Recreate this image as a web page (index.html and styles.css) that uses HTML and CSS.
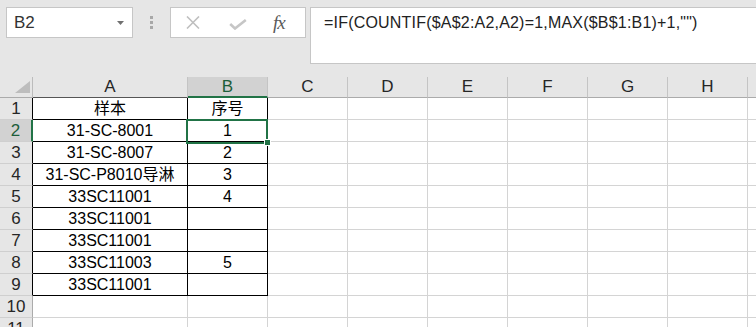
FILE: index.html
```html
<!DOCTYPE html>
<html lang="zh-CN">
<head>
    <meta charset="UTF-8">
    <title>Sheet1</title>
    <link rel="stylesheet" href="styles.css">
</head>
<body>
    <div class="toolbar">
        <div class="name-box">
            <span>B2</span>
            <svg width="7" height="4" viewBox="0 0 7 4"><polygon points="0,0 7,0 3.5,4" fill="#707070"/></svg>
        </div>
        <div class="grip"><i></i><i></i><i></i></div>
        <div class="fx-box">
            <svg class="btn-cancel" width="14" height="13" viewBox="0 0 14 13"><path d="M1 0.5 L13 12.5 M13 0.5 L1 12.5" stroke="#bfbfbf" stroke-width="1.6" fill="none"/></svg>
            <svg class="btn-ok" width="18" height="11" viewBox="0 0 18 11"><path d="M1.2 5 L6 9.5 L16.8 1" stroke="#c6c6c6" stroke-width="2.6" fill="none"/></svg>
            <span class="fx">fx</span>
        </div>
        <div class="formula-bar">=IF(COUNTIF($A$2:A2,A2)=1,MAX($B$1:B1)+1,"")</div>
    </div>

    <div class="sheet">
        <div class="row head">
            <div class="corner"><svg width="15" height="12" viewBox="0 0 15 12"><polygon points="15,0 15,12 0,12" fill="#bdbdbd"/></svg></div>
            <div class="col-head col-a">A</div>
            <div class="col-head active">B</div>
            <div class="col-head">C</div>
            <div class="col-head">D</div>
            <div class="col-head">E</div>
            <div class="col-head">F</div>
            <div class="col-head">G</div>
            <div class="col-head">H</div>
            <div class="col-head"></div>
        </div>

        <div class="row">
            <div class="row-head in-table">1</div>
            <div class="cell tb">样本</div><div class="cell tb">序号</div>
            <div class="cell"></div><div class="cell"></div><div class="cell"></div><div class="cell"></div><div class="cell"></div><div class="cell"></div><div class="cell"></div>
        </div>
        <div class="row">
            <div class="row-head in-table active">2</div>
            <div class="cell tb">31-SC-8001</div><div class="cell tb">1</div>
            <div class="cell"></div><div class="cell"></div><div class="cell"></div><div class="cell"></div><div class="cell"></div><div class="cell"></div><div class="cell"></div>
        </div>
        <div class="row">
            <div class="row-head in-table">3</div>
            <div class="cell tb">31-SC-8007</div><div class="cell tb">2</div>
            <div class="cell"></div><div class="cell"></div><div class="cell"></div><div class="cell"></div><div class="cell"></div><div class="cell"></div><div class="cell"></div>
        </div>
        <div class="row">
            <div class="row-head in-table">4</div>
            <div class="cell tb">31-SC-P8010导淋</div><div class="cell tb">3</div>
            <div class="cell"></div><div class="cell"></div><div class="cell"></div><div class="cell"></div><div class="cell"></div><div class="cell"></div><div class="cell"></div>
        </div>
        <div class="row">
            <div class="row-head in-table">5</div>
            <div class="cell tb">33SC11001</div><div class="cell tb">4</div>
            <div class="cell"></div><div class="cell"></div><div class="cell"></div><div class="cell"></div><div class="cell"></div><div class="cell"></div><div class="cell"></div>
        </div>
        <div class="row">
            <div class="row-head in-table">6</div>
            <div class="cell tb">33SC11001</div><div class="cell tb"></div>
            <div class="cell"></div><div class="cell"></div><div class="cell"></div><div class="cell"></div><div class="cell"></div><div class="cell"></div><div class="cell"></div>
        </div>
        <div class="row">
            <div class="row-head in-table">7</div>
            <div class="cell tb">33SC11001</div><div class="cell tb"></div>
            <div class="cell"></div><div class="cell"></div><div class="cell"></div><div class="cell"></div><div class="cell"></div><div class="cell"></div><div class="cell"></div>
        </div>
        <div class="row">
            <div class="row-head in-table">8</div>
            <div class="cell tb">33SC11003</div><div class="cell tb">5</div>
            <div class="cell"></div><div class="cell"></div><div class="cell"></div><div class="cell"></div><div class="cell"></div><div class="cell"></div><div class="cell"></div>
        </div>
        <div class="row">
            <div class="row-head in-table">9</div>
            <div class="cell tb">33SC11001</div><div class="cell tb"></div>
            <div class="cell"></div><div class="cell"></div><div class="cell"></div><div class="cell"></div><div class="cell"></div><div class="cell"></div><div class="cell"></div>
        </div>
        <div class="row">
            <div class="row-head">10</div>
            <div class="cell"></div><div class="cell"></div>
            <div class="cell"></div><div class="cell"></div><div class="cell"></div><div class="cell"></div><div class="cell"></div><div class="cell"></div><div class="cell"></div>
        </div>
        <div class="row">
            <div class="row-head">11</div>
            <div class="cell"></div><div class="cell"></div>
            <div class="cell"></div><div class="cell"></div><div class="cell"></div><div class="cell"></div><div class="cell"></div><div class="cell"></div><div class="cell"></div>
        </div>

        <!-- active cell B2 -->
        <div class="selection"></div>
        <div class="fill-handle"></div>
    </div>
</body>
</html>
```

FILE: styles.css
```css
body {
    margin: 0;
    width: 756px;
    height: 327px;
    overflow: hidden;
    background-color: #e6e6e6;
    font-family: "Liberation Sans", "Noto Sans CJK SC", sans-serif;
    color: #000;
}

/* Formula toolbar */
.toolbar {
    display: flex;
    align-items: flex-start;
    height: 77px;
    padding: 7px 0 0 6px;
    box-sizing: border-box;
}

.toolbar > * {
    flex-shrink: 0;
}

.name-box {
    width: 127px;
    height: 31px;
    box-sizing: border-box;
    display: flex;
    align-items: center;
    justify-content: space-between;
    padding: 0 8px 0 7px;
    background-color: #fff;
    border: 1px solid #c6c6c6;
    font-size: 17px;
    color: #333;
}

.grip {
    display: flex;
    flex-direction: column;
    gap: 2px;
    margin: 9px 0 0 17px;
}

.grip i {
    width: 3px;
    height: 3px;
    background-color: #a8a8a8;
}

.fx-box {
    width: 136px;
    height: 31px;
    box-sizing: border-box;
    margin-left: 17px;
    display: flex;
    align-items: center;
    background-color: #fff;
    border: 1px solid #c6c6c6;
}

.btn-cancel {
    margin-left: 15px;
}

.btn-ok {
    margin: 3px 0 0 29px;
}

.fx {
    margin-left: 26px;
    font-family: "Liberation Serif", serif;
    font-style: italic;
    font-size: 19px;
    color: #5a5a5a;
    letter-spacing: -1px;
}

.formula-bar {
    width: 470px;
    height: 57px;
    box-sizing: border-box;
    margin-left: 4px;
    padding: 5px 0 0 13px;
    background-color: #fff;
    border: 1px solid #c6c6c6;
    font-size: 16px;
    letter-spacing: 0.2px;
    line-height: 20px;
    color: #222;
}

/* Grid */
.sheet {
    position: relative;
}

.row {
    display: grid;
    grid-template-columns: 33px 155px repeat(8, 80px);
    grid-template-rows: 22px;
    height: 22px;
    overflow: hidden;
}

.row.head {
    grid-template-rows: 21px;
    height: 21px;
}

.row > div {
    box-sizing: border-box;
    display: flex;
    align-items: center;
    justify-content: center;
    font-size: 16px;
    line-height: 20px;
    white-space: nowrap;
    overflow: hidden;
}

.corner {
    border-right: 1px solid #bcbcbc;
    border-bottom: 1px solid #ababab;
    justify-content: flex-end !important;
    align-items: flex-end !important;
    padding: 0 2px 4px 0;
}

.col-head {
    color: #262626;
    border-right: 1px solid #c4c4c4;
    border-bottom: 1px solid #ababab;
    font-size: 17px !important;
}

.col-head.col-a {
    border-bottom-color: #555;
}

.col-head.active {
    background-color: #d2d2d2;
    color: #1d5e3a;
    border-bottom: 2px solid #217346;
}

.row-head {
    color: #262626;
    border-right: 1px solid #ababab;
    border-bottom: 1px solid #cfcfcf;
    font-size: 17px !important;
}

.row-head.in-table {
    border-right-color: #000;
}

.row-head.active {
    background-color: #d2d2d2;
    color: #1d5e3a;
    border-right: 2px solid #217346;
}

.cell {
    background-color: #fff;
    border-right: 1px solid #d4d4d4;
    border-bottom: 1px solid #d4d4d4;
}

.cell.tb {
    border-right-color: #000;
    border-bottom-color: #000;
}

/* Active cell frame */
.selection {
    position: absolute;
    left: 186px;
    top: 42px;
    width: 82px;
    height: 25px;
    box-sizing: border-box;
    border: 2px solid #217346;
}

.fill-handle {
    position: absolute;
    left: 264px;
    top: 62px;
    width: 7px;
    height: 7px;
    box-sizing: border-box;
    background-color: #217346;
    border: 1px solid #fff;
}
```
